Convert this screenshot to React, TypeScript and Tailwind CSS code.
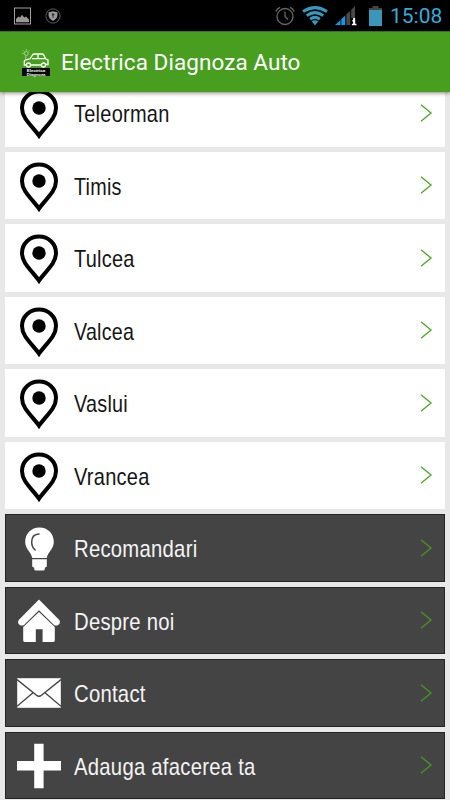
import type { ReactNode } from "react";

function PinIcon() {
  return (
    <svg className="mt-[2.5px]" width="44" height="50" viewBox="0 0 44 50" fill="none">
      <path
        d="M22 46.7C18.5 41.5 12.8 36 8.3 29.3C6 25.7 5 22.6 5 19C5 9.6 12.6 2.6 22 2.6C31.4 2.6 39 9.6 39 19C39 22.6 38 25.7 35.7 29.3C31.2 36 25.5 41.5 22 46.7Z"
        stroke="#000"
        strokeWidth="4"
      />
      <circle cx="22" cy="19" r="6.7" fill="#000" />
    </svg>
  );
}

function BulbIcon() {
  return (
    <svg className="mt-[1.5px]" width="44" height="50" viewBox="0 0 44 50">
      <path d="M22.5 3.6C14.2 3.6 8.2 9.8 8.2 17.8C8.2 25.2 13.9 27.8 15.3 34H29.7C31.1 27.8 36.8 25.2 36.8 17.8C36.8 9.8 30.8 3.6 22.5 3.6Z" fill="#fff" />
      <path d="M15.2 35.2H29.8V42.5L27.8 43.7V45.2Q27.5 46.4 26 46.4H19Q17.5 46.4 17.2 45.2V43.7L15.2 42.5Z" fill="#fff" />
      <path d="M22 10C17 10.2 14.7 13.5 14.7 18C14.7 21.5 15.8 24 18.2 26" fill="none" stroke="#444" strokeWidth="1.5" strokeLinecap="round" />
    </svg>
  );
}

function HomeIcon() {
  return (
    <svg className="mt-[2px]" width="44" height="50" viewBox="0 0 44 50">
      <path d="M22 3.4L42.3 24Q44 27 41.2 29Q38.6 30.3 36.8 28.7L22 14.2L7.2 28.7Q5.4 30.3 2.8 29Q0 27 1.7 24Z" fill="#fff" />
      <path d="M22 16L37.8 31V44.6Q37.8 46 36.3 46H25.6V33.3H18.8V46H7.7Q6.2 46 6.2 44.6V31Z" fill="#fff" />
    </svg>
  );
}

function MailIcon() {
  return (
    <svg className="mt-px" width="44" height="50" viewBox="0 0 44 50">
      <rect x="0.2" y="10.2" width="43.6" height="29.6" fill="#fff" />
      <path d="M0 11.5L19.5 27.3Q22 29.3 24.5 27.3L44 11.5M0 38.3L15.7 25M44 38.3L28.3 25" fill="none" stroke="#444" strokeWidth="1.4" />
    </svg>
  );
}

function PlusIcon() {
  return (
    <svg className="mt-px" width="44" height="50" viewBox="0 0 44 50">
      <path d="M17.2 2.8H26.6V20.1H44V29.6H26.6V47.2H17.2V29.6H0V20.1H17.2Z" fill="#fff" />
    </svg>
  );
}

type Row = {
  label: string;
  icon: ReactNode;
  fit: string;
  dark?: boolean;
};

// fit condenses each label to a narrow face
const rows: Row[] = [
  { label: "Teleorman", icon: <PinIcon />, fit: "scale-x-[0.833]" },
  { label: "Timis", icon: <PinIcon />, fit: "scale-x-[0.823]" },
  { label: "Tulcea", icon: <PinIcon />, fit: "scale-x-[0.83]" },
  { label: "Valcea", icon: <PinIcon />, fit: "scale-x-[0.82]" },
  { label: "Vaslui", icon: <PinIcon />, fit: "scale-x-[0.825]" },
  { label: "Vrancea", icon: <PinIcon />, fit: "scale-x-[0.835]" },
  { label: "Recomandari", icon: <BulbIcon />, fit: "scale-x-[0.845]", dark: true },
  { label: "Despre noi", icon: <HomeIcon />, fit: "scale-x-[0.845]", dark: true },
  { label: "Contact", icon: <MailIcon />, fit: "scale-x-[0.845]", dark: true },
  { label: "Adauga afacerea ta", icon: <PlusIcon />, fit: "scale-x-[0.845]", dark: true },
];

function StatusBar() {
  return (
    <div className="flex h-[31px] items-center bg-black pl-[14px] pr-2">
      <svg width="17" height="18" viewBox="0 0 17 18">
        <rect x="0.5" y="1" width="16" height="16" fill="none" stroke="#a0a0a0" />
        <path d="M2 15.2V12L4.5 9.5L6 10.5L8 7.8L10.2 10.5L12 9.5L15 12.5V15.2Z" fill="#999" />
      </svg>
      <svg className="ml-[14px]" width="16" height="16" viewBox="0 0 16 16">
        <circle cx="8" cy="8" r="7.1" fill="none" stroke="#5c5c5c" strokeWidth="1" />
        <path d="M8 3.3L12.4 4.3V7.5Q12 11 8 12.9Q4 11 3.6 7.5V4.3Z" fill="#999" />
        <circle cx="8" cy="6.5" r="1.3" fill="#333" />
        <path d="M8 7V10" stroke="#333" strokeWidth="1" />
      </svg>
      <div className="ml-auto flex items-center">
        <svg width="20" height="20" viewBox="0 0 20 20" fill="none" stroke="#686868" strokeWidth="1.3">
          <circle cx="10" cy="10.5" r="8" />
          <path d="M10 5.5V10.5L13 13.5M0.8 5.5Q2 2.6 5 1.3M19.2 5.5Q18 2.6 15 1.3" />
        </svg>
        <svg className="ml-[7px]" width="26" height="20" viewBox="0 0 26 20" fill="none" stroke="#3498bf" strokeWidth="3">
          <path d="M1 5.6Q13 -2.4 25 5.6M4.7 9.6Q13 3.6 21.3 9.6M8.2 13.2Q13 9.4 17.8 13.2" />
          <path d="M9.7 15.3Q13 13 16.3 15.3L13 19.5Z" fill="#3498bf" stroke="none" />
        </svg>
        <svg className="ml-[7px]" width="22" height="20" viewBox="0 0 22 20">
          <path d="M0 19L5.5 14V19Z" fill="#0d9be5" />
          <path d="M6.3 13.2L10.2 9.4V19H6.3Z" fill="#0d9be5" />
          <path d="M11.3 8.5L15.2 4.7V19H11.3ZM16.2 3.8L20 0V12H16.2Z" fill="#484848" />
          <path d="M17.3 14H20.2V17.7H21.5V19.3H16.9V17.7H18.1V15.5H17.3Z" fill="#fff" />
          <rect x="18.1" y="12" width="2" height="2.5" fill="#fff" />
        </svg>
        <svg className="ml-[12px]" width="13" height="20" viewBox="0 0 13 20">
          <path d="M3.5 0H9.5V2H13V5H0V2H3.5Z" fill="#454545" />
          <rect y="4" width="13" height="16" fill="#3b96ba" />
        </svg>
        <span className="ml-2 w-[52px] whitespace-nowrap pt-[2px] font-[Roboto,sans-serif] text-[21px] leading-[29px] text-[#35aada]">
          15:08
        </span>
      </div>
    </div>
  );
}

function Header() {
  return (
    <header className="relative z-10 flex h-[60.5px] items-center border-t border-[#347516] bg-[#489f1f] pl-[21px] shadow-[0_1px_4px_rgba(0,0,0,0.5)]">
      <svg className="mt-[2px]" width="29" height="28" viewBox="0 0 29 28">
        <g fill="none" stroke="#fff" strokeWidth="1.3">
          <path d="M5.5 16H3.3V12.3Q3.3 11.2 5 10.8L9 9.8L11.8 5.6Q12.2 5 13.2 5H21Q22.2 5 22.8 6.1L24.8 10L27 11V15.5H24.5M9.5 16H20.5" />
          <path d="M11 9.7H23.7M17 5.3V9.6" />
          <circle cx="7.5" cy="16" r="2" />
          <circle cx="22.5" cy="16" r="2" />
        </g>
        <g fill="none" stroke="#b8dfaa" strokeWidth="0.8">
          <circle cx="5.3" cy="4.5" r="2" />
          <path d="M4.8 7V10M5.3 0V1.5M1 4.5H2.5M2 1.5L3 2.5M8.5 1.5L7.7 2.3" />
        </g>
        <rect x="1" y="19" width="28" height="8" fill="#080808" />
        <text x="15" y="23" textAnchor="middle" fontSize="4.4" fontWeight="700" fontFamily="Liberation Sans, sans-serif" fill="#fff">Electrica</text>
        <text x="15" y="26.5" textAnchor="middle" fontSize="4.2" fontWeight="700" fontFamily="Liberation Sans, sans-serif" fill="#fff">Diagnoza</text>
      </svg>
      <h1 className="ml-[11px] whitespace-nowrap pt-px font-[Roboto,sans-serif] text-[22.5px] leading-none tracking-[0.06px] text-white">
        Electrica Diagnoza Auto
      </h1>
    </header>
  );
}

function MenuRow({ row }: { row: Row }) {
  return (
    <li
      className={
        row.dark
          ? "flex h-[67.5px] shrink-0 items-center border border-[#242424] bg-[#444] px-[11px] text-[#f4f4f4]"
          : "flex h-[67.5px] shrink-0 items-center bg-white px-3 text-[#151515]"
      }
    >
      {row.icon}
      <span className={`ml-[13px] origin-left whitespace-nowrap pt-[3px] font-['Liberation_Sans',sans-serif] text-[24px] leading-8 tracking-[0.3px] ${row.fit}`}>
        {row.label}
      </span>
      <svg className="ml-auto" width="13" height="20" viewBox="0 0 13 20" fill="none" stroke={row.dark ? "#469424" : "#51a92b"} strokeWidth="1.4">
        <path d="M1 1.7L11 10L1 18.3" />
      </svg>
    </li>
  );
}

export default function App() {
  return (
    <div className="flex h-[800px] w-[450px] flex-col overflow-hidden bg-[#e8e8e8]">
      <StatusBar />
      <Header />
      <main className="min-h-0 flex-1 overflow-hidden px-[5px]">
        {/* The first row is scrolled partly under the header */}
        <ul className="-mt-[12.3px] flex flex-col gap-[5px]">
          {rows.map((row) => (
            <MenuRow key={row.label} row={row} />
          ))}
        </ul>
      </main>
    </div>
  );
}
